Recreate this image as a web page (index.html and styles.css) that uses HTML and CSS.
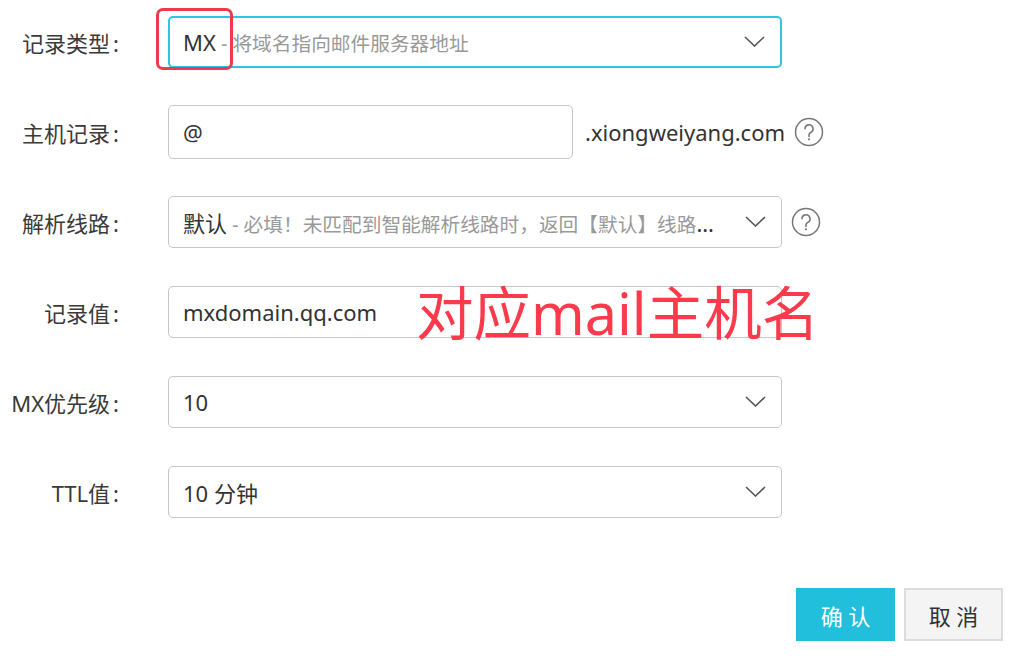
FILE: index.html
```html
<!DOCTYPE html>
<html lang="zh-CN">
<head>
<meta charset="utf-8">
<title>MX 记录</title>
<link rel="stylesheet" href="styles.css">
</head>
<body>
<div class="page">
  <form class="form">
    <div class="row">
      <label class="lbl">记录类型<span class="colon">:</span></label>
      <div class="field select focus">
        <span class="text"><span class="val">MX</span><span class="hint"> - 将域名指向邮件服务器地址</span></span>
        <svg class="chev" width="21" height="11" viewBox="0 0 21 11"><polyline points="1,1 10.5,10 20,1" fill="none" stroke="#555" stroke-width="1.6"/></svg>
      </div>
    </div>
    <div class="row">
      <label class="lbl">主机记录<span class="colon">:</span></label>
      <div class="field input short"><span class="val">@</span></div>
      <span class="suffix">.xiongweiyang.com</span>
      <svg class="help" width="30" height="30" viewBox="0 0 30 30"><circle cx="15" cy="15" r="13.5" fill="none" stroke="#777" stroke-width="1.5"/><path d="M11 11.8a4 4 0 1 1 5.6 3.7c-1.1.5-1.6 1.3-1.6 2.5v1.4" fill="none" stroke="#777" stroke-width="1.6" stroke-linecap="round"/><circle cx="15" cy="22.3" r="1.1" fill="#777"/></svg>
    </div>
    <div class="row">
      <label class="lbl">解析线路<span class="colon">:</span></label>
      <div class="field select">
        <span class="text"><span class="val">默认</span><span class="hint"> - 必填！未匹配到智能解析线路时，返回【默认】线路设置结果</span></span>
        <svg class="chev" width="21" height="11" viewBox="0 0 21 11"><polyline points="1,1 10.5,10 20,1" fill="none" stroke="#555" stroke-width="1.6"/></svg>
      </div>
      <svg class="help" width="30" height="30" viewBox="0 0 30 30"><circle cx="15" cy="15" r="13.5" fill="none" stroke="#777" stroke-width="1.5"/><path d="M11 11.8a4 4 0 1 1 5.6 3.7c-1.1.5-1.6 1.3-1.6 2.5v1.4" fill="none" stroke="#777" stroke-width="1.6" stroke-linecap="round"/><circle cx="15" cy="22.3" r="1.1" fill="#777"/></svg>
    </div>
    <div class="row">
      <label class="lbl">记录值<span class="colon">:</span></label>
      <div class="field input"><span class="val">mxdomain.qq.com</span></div>
    </div>
    <div class="row">
      <label class="lbl">MX优先级<span class="colon">:</span></label>
      <div class="field select">
        <span class="text"><span class="val">10</span></span>
        <svg class="chev" width="21" height="11" viewBox="0 0 21 11"><polyline points="1,1 10.5,10 20,1" fill="none" stroke="#555" stroke-width="1.6"/></svg>
      </div>
    </div>
    <div class="row">
      <label class="lbl">TTL值<span class="colon">:</span></label>
      <div class="field select">
        <span class="text"><span class="val">10 分钟</span></span>
        <svg class="chev" width="21" height="11" viewBox="0 0 21 11"><polyline points="1,1 10.5,10 20,1" fill="none" stroke="#555" stroke-width="1.6"/></svg>
      </div>
    </div>
    <div class="actions">
      <button type="button" class="btn primary">确 认</button>
      <button type="button" class="btn">取 消</button>
    </div>
  </form>
  <div class="mark"></div>
  <div class="note">对应mail主机名</div>
</div>
</body>
</html>
```
FILE: styles.css
```css
* { box-sizing: border-box; }
html, body { margin: 0; padding: 0; background: #fff; }
body {
  font-family: "Noto Sans", "Noto Sans CJK SC", sans-serif;
  color: #333;
}
.page {
  position: relative;
  width: 1024px;
  height: 656px;
  overflow: hidden;
}
.form {
  display: flex;
  flex-direction: column;
  gap: 37px;
  padding-top: 15px;
}
.row {
  display: flex;
  align-items: center;
  height: 53px;
}
.lbl {
  width: 119px;
  margin-right: 49px;
  text-align: right;
  font-size: 22px;
  color: #3a3a3a;
  white-space: nowrap;
}
.colon { margin-left: 3px; }
.field {
  display: flex;
  align-items: center;
  width: 614px;
  height: 52px;
  padding: 0 15px 0 14px;
  border: 1px solid #c6c6c6;
  border-radius: 5px;
  background: #fff;
  font-size: 22px;
}
.field.short { width: 405px; height: 54px; }
.field.focus { border: 2px solid #2ec4e2; padding-left: 13px; }
.text {
  flex: 1;
  min-width: 0;
  white-space: nowrap;
  overflow: hidden;
  text-overflow: ellipsis;
  margin-right: 12px;
}
.val { color: #333; }
.hint { color: #999; font-size: 19.7px; }
.chev { flex: none; }
.suffix {
  margin-left: 12px;
  font-size: 22px;
  color: #333;
}
.help { margin-left: 9px; flex: none; }
.actions {
  display: flex;
  justify-content: flex-end;
  gap: 9px;
  margin-top: 33px;
  padding-right: 21px;
}
.btn {
  width: 99px;
  height: 53px;
  border: 2px solid #dcdcdc;
  background: #f4f4f4;
  color: #333;
  font-family: inherit;
  font-size: 22px;
  padding: 0;
}
.btn.primary {
  background: #22bfdc;
  border-color: #22bfdc;
  color: #fff;
}
.mark {
  position: absolute;
  left: 156px;
  top: 8px;
  width: 77px;
  height: 62px;
  border: 3px solid #f03a4b;
  border-radius: 7px;
}
.note {
  position: absolute;
  left: 416px;
  top: 285px;
  font-size: 57.5px;
  line-height: 1;
  color: #fb3b4c;
  white-space: nowrap;
}
```
